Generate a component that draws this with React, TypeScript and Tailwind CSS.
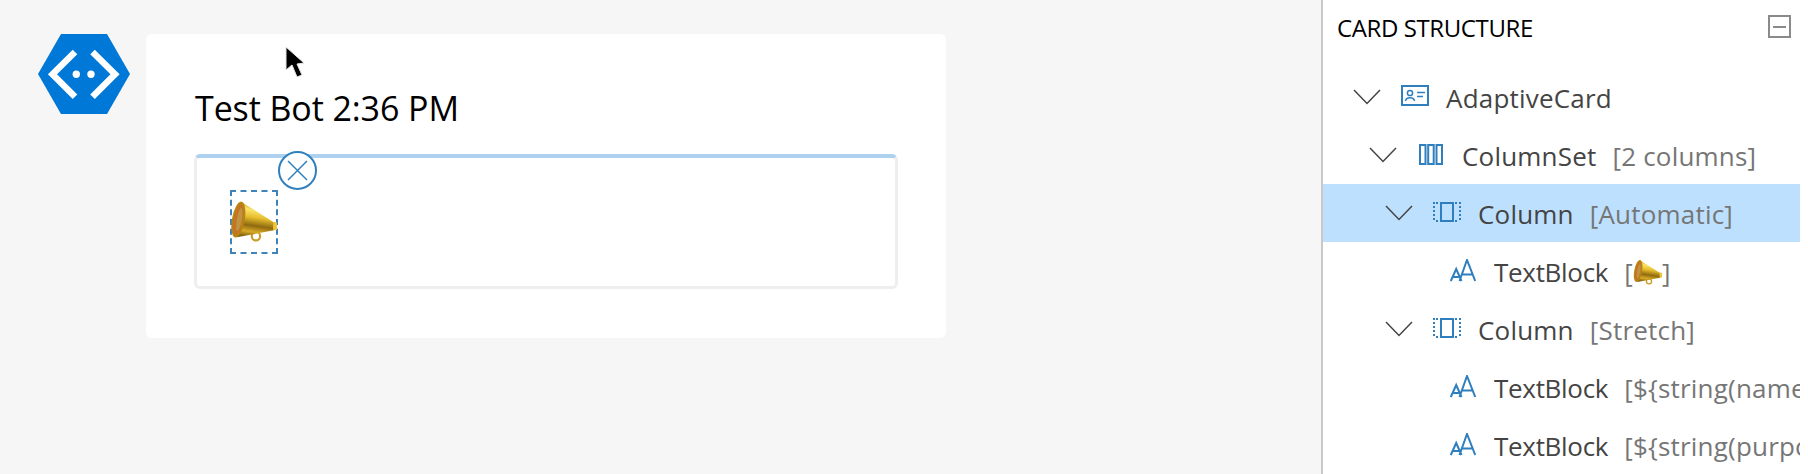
import type { ReactNode } from "react";

const blue = "#2f7fbf";

function Logo() {
  return (
    <svg width="92" height="80" viewBox="0 0 92 80" className="shrink-0">
      <polygon points="23,0 69,0 92,40 69,80 23,80 0,40" fill="#0078d7" />
      <path d="M37 18 L14.500 40.300 L37 62.700 M54.500 18 L77 40.300 L54.500 62.700" fill="none" stroke="#fff" strokeWidth="6.500" />
      <circle cx="38.300" cy="40.300" r="3.700" fill="#fff" />
      <circle cx="53" cy="40.300" r="3.700" fill="#fff" />
    </svg>
  );
}

function Megaphone({ width, id }: { width: number; id: string }) {
  return (
    <svg width={width} viewBox="0 0 48 44" className="inline-block shrink-0">
      <defs>
        <linearGradient id={id} x1="0.550" y1="0" x2="0.400" y2="1">
          <stop offset="0" stopColor="#c99a1c" />
          <stop offset="0.250" stopColor="#fbe36a" />
          <stop offset="0.450" stopColor="#e6bd2e" />
          <stop offset="0.680" stopColor="#8f6a10" />
          <stop offset="0.850" stopColor="#d8ab26" />
          <stop offset="1" stopColor="#80600e" />
        </linearGradient>
      </defs>
      <circle cx="26.500" cy="37" r="4.300" fill="none" stroke="#c99c22" strokeWidth="2.200" />
      <path d="M11 1.500 L45 23 L45 31 L7 38 Z" fill={`url(#${id})`} />
      <rect x="44" y="22.500" width="4" height="8.500" rx="1.500" fill="#efc537" />
      <ellipse cx="8.500" cy="20" rx="6.500" ry="18.500" transform="rotate(10 8.500 20)" fill="#b5860f" />
      <ellipse cx="8.500" cy="20" rx="4.500" ry="15.500" transform="rotate(10 8.500 20)" fill="#c9702a" />
      <ellipse cx="9.500" cy="20" rx="2.600" ry="12" transform="rotate(10 9.500 20)" fill="#bd9540" />
    </svg>
  );
}

function Chevron() {
  return (
    <svg width="28" height="16" viewBox="0 0 28 16" className="shrink-0">
      <path d="M1 1 L14 14.500 L27 1" fill="none" stroke="#444" strokeWidth="1.500" />
    </svg>
  );
}

function CardIcon() {
  return (
    <svg width="28" height="21" viewBox="0 0 28 21" className="-mt-[3px]">
      <rect x="1" y="1" width="26" height="19" fill="none" stroke={blue} strokeWidth="2" />
      <circle cx="9" cy="8" r="2.600" fill="none" stroke={blue} strokeWidth="1.500" />
      <path d="M4.500 16 C5 11.500 13 11.500 13.500 16 M16 7.500 H24 M16 11.500 H22" fill="none" stroke={blue} strokeWidth="1.500" />
    </svg>
  );
}

function ColumnSetIcon() {
  return (
    <svg width="24" height="21" viewBox="0 0 24 21" className="ml-[2px] -mt-[2px]">
      <g fill="none" stroke={blue} strokeWidth="2">
        <rect x="1" y="1" width="5.500" height="19" />
        <rect x="9.200" y="1" width="5.500" height="19" />
        <rect x="17.500" y="1" width="5.500" height="19" />
      </g>
    </svg>
  );
}

function ColumnIcon() {
  return (
    <svg width="28" height="20" viewBox="0 0 28 20" className="-mt-[2px]">
      <rect x="8" y="1" width="12" height="18" fill="none" stroke={blue} strokeWidth="2" />
      <path d="M1 0 V20 M27 0 V20" stroke={blue} strokeWidth="2" strokeDasharray="2 2" />
      <path d="M3 1 H6 M3 19 H6 M22 1 H25 M22 19 H25" stroke={blue} strokeWidth="2" strokeDasharray="2 2" />
    </svg>
  );
}

function TextBlockIcon() {
  return (
    <svg width="26" height="23" viewBox="0 0 26 23" className="ml-px -mt-[2px]">
      <path d="M0.800 22 L6.200 10 L11.500 22 M2.500 18 H10 M9.500 22 L17 1 L25.200 22 M12 15.500 H22.500" fill="none" stroke={blue} strokeWidth="2" />
    </svg>
  );
}

function TreeRow({
  depth,
  chevron,
  icon,
  label,
  labelClass,
  detail,
  selected,
}: {
  depth: number;
  chevron?: boolean;
  icon: ReactNode;
  label: string;
  labelClass?: string;
  detail?: ReactNode;
  selected?: boolean;
}) {
  return (
    <div className={`flex h-[58px] items-center overflow-hidden whitespace-nowrap ${selected ? "bg-[#bde0ff]" : ""}`}>
      <div className="w-[30px] shrink-0" />
      <div className="shrink-0" style={{ width: depth * 16 }} />
      <div className="flex w-[48px] shrink-0 items-center">{chevron && <Chevron />}</div>
      <div className="flex w-[45px] shrink-0 items-center">{icon}</div>
      <span className={`mt-[2px] text-[#444] ${labelClass ?? ""}`}>{label}</span>
      {detail && <span className="ml-[16px] mt-[2px] inline-flex items-center text-[#767676]">{detail}</span>}
    </div>
  );
}

export default function App() {
  return (
    <div className="flex h-[474px] w-[1808px] overflow-hidden bg-white font-['Open_Sans','Liberation_Sans',sans-serif]">
      <div className="relative flex w-[1321px] shrink-0 items-start gap-4 bg-[#f6f6f6] pl-[38px] pt-[34px]">
        <Logo />
        <div className="h-[304px] w-[800px] rounded-md bg-white pl-[48px] pt-[51px]">
          <div className="ml-px h-[46px] text-[34px] leading-[46px] tracking-[-0.1px] text-black">Test Bot 2:36 PM</div>
          <div className="relative mt-[23px] h-[135px] w-[704px] rounded-md border-[3px] border-t-4 border-[#eeeeee] border-t-[#aed1f0] pl-[33px] pt-[32px]">
            <div className="flex h-[64px] w-[48px] items-center border-2 border-dashed border-[#3f83bb]">
              <div className="-ml-[2px] flex">
                <Megaphone width={47} id="mega-card" />
              </div>
            </div>
            <div className="absolute left-[81px] top-[-7px] flex h-[39px] w-[39px] items-center justify-center rounded-full border-2 border-[#2f80bf] bg-white">
              <svg width="21" height="21" viewBox="0 0 21 21">
                <path d="M1 1 L20 20 M20 1 L1 20" stroke="#2f80bf" strokeWidth="1.500" />
              </svg>
            </div>
          </div>
        </div>
        <svg width="20" height="33" viewBox="0 0 20 33" className="absolute left-[285px] top-[46px]">
          <path d="M1 1 L1 24 L7 19 L12 31 L17 29 L12 18 L19 17 Z" fill="#000" stroke="#e5e5e5" strokeWidth="1" />
        </svg>
      </div>
      <div className="h-full w-[479px] shrink-0 border-l-2 border-[#c8c8c8] text-[26px] tracking-[0.2px]">
        <div className="flex h-[68px] items-start justify-between pl-[14px] pr-[9px] pt-[15px]">
          <span className="text-[24px] leading-[26px] tracking-[-0.4px] text-black">CARD STRUCTURE</span>
          <div className="flex h-[23px] w-[23px] items-center justify-center border-2 border-[#8a8a8a]">
            <div className="h-[2px] w-[13px] bg-[#8a8a8a]" />
          </div>
        </div>
        <TreeRow depth={0} chevron icon={<CardIcon />} label="AdaptiveCard" />
        <TreeRow depth={1} chevron icon={<ColumnSetIcon />} label="ColumnSet" detail="[2 columns]" />
        <TreeRow depth={2} chevron selected icon={<ColumnIcon />} label="Column" detail="[Automatic]" />
        <TreeRow
          depth={3}
          icon={<TextBlockIcon />}
          label="TextBlock"
          labelClass="tracking-[-0.3px]"
          detail={
            <>
              [<Megaphone width={29} id="mega-tree" />]
            </>
          }
        />
        <TreeRow depth={2} chevron icon={<ColumnIcon />} label="Column" detail="[Stretch]" />
        <TreeRow depth={3} icon={<TextBlockIcon />} label="TextBlock" labelClass="tracking-[-0.3px]" detail="[${string(name)}]" />
        <TreeRow depth={3} icon={<TextBlockIcon />} label="TextBlock" labelClass="tracking-[-0.3px]" detail="[${string(purpose)}]" />
      </div>
    </div>
  );
}
